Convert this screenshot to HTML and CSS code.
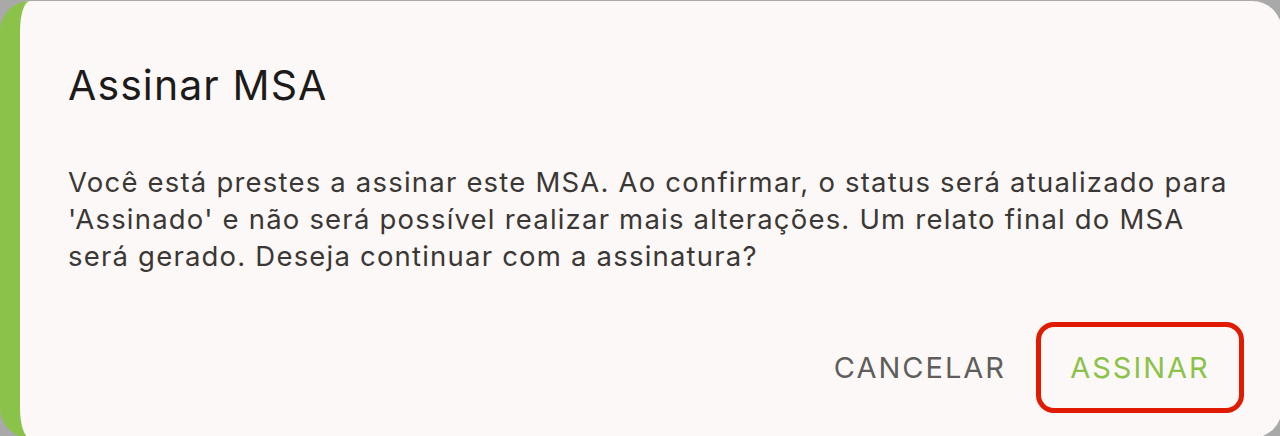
FILE: index.html
```html
<!DOCTYPE html>
<html lang="pt">
<head>
<meta charset="utf-8">
<title>Assinar MSA</title>
<link rel="stylesheet" href="styles.css">
</head>
<body>
<div class="page">
  <div class="dialog">
    <h1 class="title">Assinar MSA</h1>
    <p class="content">Você está prestes a assinar este MSA. Ao confirmar, o status será atualizado para 'Assinado' e não será possível realizar mais alterações. Um relato final do MSA será gerado. Deseja continuar com a assinatura?</p>
    <div class="actions">
      <button class="btn btn-cancel">CANCELAR</button>
      <button class="btn btn-confirm">ASSINAR</button>
    </div>
  </div>
</div>
</body>
</html>
```
FILE: styles.css
```css
html, body {
  margin: 0;
  padding: 0;
  background: #a9a9a9;
}
.page {
  width: 1280px;
  height: 436px;
  overflow: hidden;
  padding-top: 1px;
  box-sizing: border-box;
}
.dialog {
  width: 1282px;
  height: 437px;
  box-sizing: border-box;
  background: #fcf8f7;
  border-left: 20px solid #8bc34a;
  border-radius: 30px;
  padding: 0 0 0 48px;
  display: flex;
  flex-direction: column;
  font-family: Inter, "Noto Sans", sans-serif;
}
.title {
  margin: 58px 0 0 0;
  font-size: 41px;
  font-weight: 400;
  line-height: 52px;
  color: #1c1b1a;
  letter-spacing: 1.1px;
}
.content {
  margin: 53px 0 0 0;
  width: 1180px;
  font-size: 27.5px;
  line-height: 37px;
  letter-spacing: 1.2px;
  color: #3a3735;
}
.actions {
  display: flex;
  justify-content: flex-end;
  align-items: center;
  gap: 30px;
  margin-top: 47px;
  padding-right: 38px;
}
.btn {
  font-family: Inter, "Noto Sans", sans-serif;
  background: transparent;
  border: none;
  font-size: 29px;
  font-weight: 400;
  letter-spacing: 2px;
  cursor: pointer;
}
.btn-cancel {
  color: #5f5e5d;
  padding: 0;
}
.btn-confirm {
  color: #8bc34a;
  border: 5px solid #e01b00;
  border-radius: 18px;
  width: 208px;
  height: 91px;
  padding: 0;
}
```
